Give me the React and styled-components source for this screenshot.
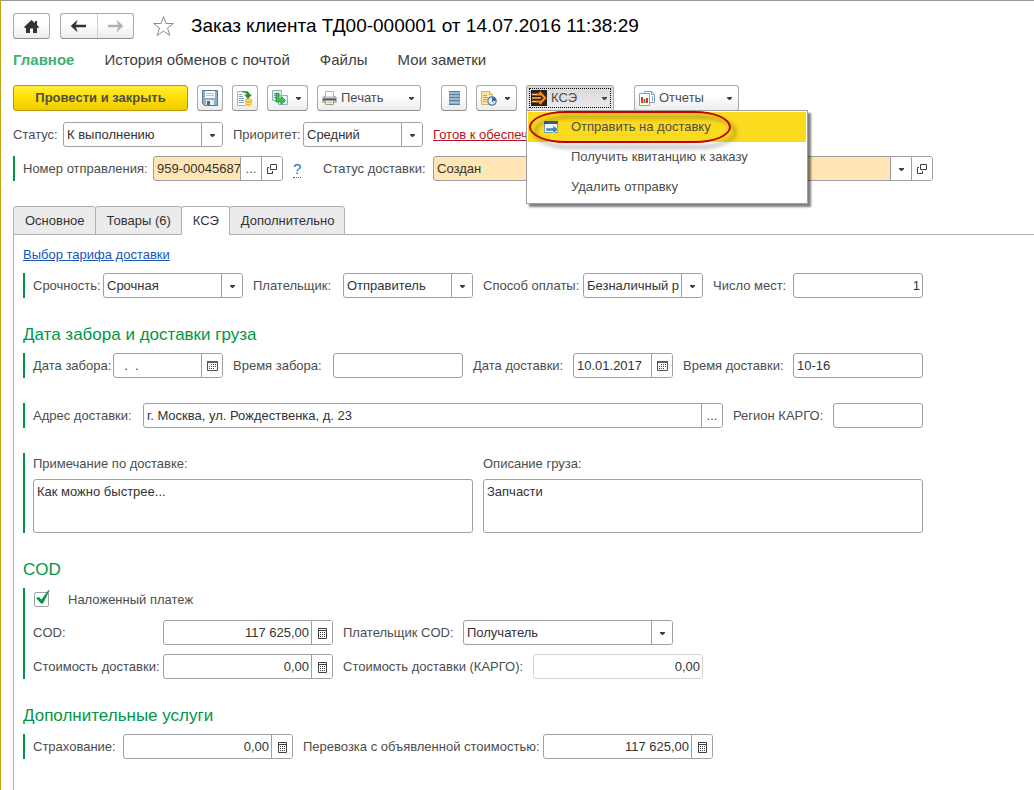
import React from 'react'
import styled, { createGlobalStyle, css } from 'styled-components'

const GlobalStyle = createGlobalStyle`
* {
    box-sizing: border-box;
}
body {
    margin: 0;
    background: #fff;
    color: #4d4d4d;
    font: 13px/16px "Liberation Sans", Arial, sans-serif;
}
button, input, select, textarea {
    font: inherit;
    color: inherit;
    margin: 0;
}
`;

const Window = styled.main`
    display: flex;
    flex-direction: column;
    min-height: 100vh;
    padding: 12px 0 0 12px;
    border-top: 1px solid #999;
    border-left: 1px solid #c4a414;
`;

const TitleBar = styled.header`
    display: flex;
    align-items: center;
    gap: 10px;
`;

const Title = styled.h1`
    margin: 0 0 0 6px;
    font-size: 19px;
    line-height: 24px;
    font-weight: 400;
    color: #000;
`;

const buttonLook = css`
    height: 26px;
    border: 1px solid #a9a9a9;
    border-bottom-color: #8f8f8f;
    border-radius: 3px;
    background: linear-gradient(#fff 40%, #ececec);
`;

const Button = styled.button`
    ${buttonLook}
    display: flex;
    align-items: center;
    justify-content: ${p => (p.$menu ? 'flex-start' : 'center')};
    gap: 4px;
    width: ${p => p.$width || 26}px;
    padding: ${p => (p.$menu ? '0 5px 0 4px' : 0)};
    svg {
        flex: none;
    }
    svg:last-child:not(:first-child) {
        margin-left: auto;
    }
`;

const PrimaryButton = styled(Button)`
    border-color: #b89b00;
    background: linear-gradient(#ffec3d, #ffdf00 50%, #efcb00);
    font-weight: 700;
    color: #4d4d4d;
`;

const PressedButton = styled(Button)`
    position: relative;
    background: linear-gradient(#d8d8d8, #ececec);
    &::after {
        content: '';
        position: absolute;
        inset: 2px;
        border: 1px dotted #000;
    }
`;

const HistoryButtons = styled.div`
    ${buttonLook}
    display: flex;
    width: 74px;
    button {
        flex: 1;
        display: grid;
        place-items: center;
        padding: 0;
        border: 0;
        background: none;
    }
    button + button {
        border-left: 1px solid #d0d0d0;
    }
`;

const StarButton = styled.button`
    display: grid;
    margin-left: 8px;
    padding: 0;
    border: 0;
    background: none;
`;

const Sections = styled.nav`
    display: flex;
    gap: 30px;
    padding: 12px 0 16px;
    font-size: 15px;
    line-height: 18px;
`;

const SectionLink = styled.a`
    color: ${p => (p.$active ? '#3bb273' : '#404040')};
    font-weight: ${p => (p.$active ? 700 : 400)};
    text-decoration: none;
`;

const CommandBar = styled.div`
    display: flex;
    gap: 20px;
`;

const CommandGroup = styled.div`
    display: flex;
    gap: 9px;
`;

const MenuAnchor = styled.div`
    position: relative;
`;

const Menu = styled.ul`
    position: absolute;
    top: 100%;
    left: 0;
    z-index: 5;
    width: 282px;
    margin: -1px 0 0;
    padding: 1px;
    list-style: none;
    background: #fff;
    border: 1px solid #a0a0a0;
    box-shadow: 3px 3px 2px rgba(0, 0, 0, .5);
`;

const MenuItem = styled.button`
    display: grid;
    grid-template-columns: 27px 1fr;
    align-items: center;
    width: 100%;
    height: 30px;
    padding: 0 16px;
    border: 0;
    text-align: left;
    background: ${p => (p.$active ? '#fcdb1f' : 'none')};
    span {
        grid-column: 2;
    }
`;

const Marker = styled.i`
    position: absolute;
    top: 0;
    left: 2px;
    width: 202px;
    height: 32px;
    border: 2px solid #c00000;
    border-radius: 36px / 16px;
    filter: drop-shadow(5px 5px 2px rgba(0, 0, 0, .45));
    pointer-events: none;
`;

const Row = styled.div`
    display: flex;
    align-items: center;
    gap: 10px;
    margin-top: ${p => p.$top || 0}px;
`;

const Group = styled.div`
    display: flex;
    flex-direction: column;
    gap: 9px;
    margin-top: ${p => p.$top || 0}px;
    padding-left: 8px;
    border-left: 2px solid #009646;
`;

const FieldBox = styled.div`
    display: flex;
    align-items: center;
    flex: 0 1 ${p => p.$label + p.$width}px;
    min-width: 0;
    > label {
        flex: none;
        width: ${p => p.$label}px;
        white-space: nowrap;
    }
`;

const Control = styled.div`
    flex: 1;
    display: flex;
    min-width: 0;
    height: 25px;
    overflow: hidden;
    border: 1px solid ${p => (p.$dim ? '#d4d4d4' : '#a0a0a0')};
    border-radius: 3px;
    background: ${p => (p.$filled ? '#ffe6b4' : '#fff')};
`;

const Input = styled.input`
    flex: 1;
    min-width: 0;
    width: 100%;
    padding: 0 ${p => (p.$right ? 2 : 0)}px 0 3px;
    border: 0;
    background: none;
    color: #333;
    outline: 0;
    text-align: ${p => (p.$right ? 'right' : 'left')};
`;

const Select = styled.select`
    flex: 1;
    min-width: 0;
    padding: 0 23px 0 3px;
    border: 0;
    background: none;
    color: #333;
    outline: 0;
    appearance: none;
`;

const Addon = styled.button`
    flex: none;
    display: grid;
    place-items: center;
    width: 21px;
    padding: 0;
    border: 0;
    border-left: 1px solid #a0a0a0;
    background: #fff;
`;

// lies over the right end of the select, clicks go through to it
const SelectArrow = styled(Addon)`
    margin-left: -21px;
    pointer-events: none;
`;

const StatusLink = styled.a`
    color: #b4141e;
`;

const HelpLink = styled.a`
    flex: none;
    width: 20px;
    color: #1a73b8;
    font-size: 15px;
    text-decoration: none;
    span {
        border-bottom: 1px dotted #1a73b8;
    }
`;

const Tabs = styled.div`
    display: flex;
    margin-top: 25px;
`;

const Tab = styled.button`
    height: 29px;
    margin: 0 0 -1px -1px;
    padding: 0 10px 0 11px;
    border: 1px solid #b0b0b0;
    border-bottom-color: ${p => (p.$active ? '#fff' : '#b0b0b0')};
    border-radius: 3px 3px 0 0;
    background: ${p => (p.$active ? '#fff' : '#ebebeb')};
    color: #333;
    z-index: 1;
    &:first-child {
        margin-left: 0;
    }
`;

const TabPanel = styled.section`
    flex: 1;
    padding: 12px 9px 16px;
    border: 1px solid #b0b0b0;
    border-width: 1px 0 0 1px;
`;

const Form = styled.form`
    max-width: 900px;
`;

const TariffLink = styled.a`
    display: inline-block;
    color: #1a55b8;
`;

const Heading = styled.h2`
    margin: 27px 0 8px;
    font-size: 17px;
    line-height: 20px;
    font-weight: 400;
    color: #009646;
`;

const Notes = styled.div`
    display: grid;
    grid-template-columns: 1fr 1fr;
    gap: 10px;
    label {
        display: block;
        padding: 3px 0 7px;
    }
`;

const Textarea = styled.textarea`
    display: block;
    width: 100%;
    height: 54px;
    padding: 4px 3px;
    border: 1px solid #a0a0a0;
    border-radius: 3px;
    color: #333;
    resize: none;
    outline: 0;
`;

const CheckLabel = styled.label`
    position: relative;
    display: flex;
    align-items: center;
    gap: 19px;
    height: 23px;
    svg {
        position: absolute;
        left: 1px;
        top: 2px;
        pointer-events: none;
    }
`;

const Checkbox = styled.input`
    width: 15px;
    height: 15px;
    margin-left: 1px;
    appearance: none;
    border: 1px solid #a0a0a0;
    border-radius: 2px;
    &:not(:checked) + svg {
        display: none;
    }
`;

const Arrow = () => (
  <svg width="7" height="6" viewBox="0 0 7 6"><path d="M1 2h5v1L4 5H3L1 3z" fill="#404040" /></svg>
)

const OpenIcon = () => (
  <svg width="10" height="10" viewBox="0 0 10 10" fill="none" stroke="#404040"><path d="M3.500.5h6v5h-6zM2 3.500H.5v6h5V7" /></svg>
)

const CalendarIcon = () => (
  <svg width="11" height="10" viewBox="0 0 11 10">
    <path d="M.5.5h10v9H.5z" fill="none" stroke="#505050" />
    <path d="M0 0h11v2H0z" fill="#606060" />
    <path d="M4 3.500h5M2 5.500h7M2 7.500h5" stroke="#404040" strokeDasharray="1 1" />
  </svg>
)

const CalcIcon = () => (
  <svg width="9" height="12" viewBox="0 0 9 12">
    <path d="M.5 1.500h8v10h-8zM.5 3.500h8" fill="none" stroke="#404040" />
    <path d="M2 5.500h5M2 7.500h5M2 9.500h5" stroke="#404040" strokeDasharray="1 1" />
  </svg>
)

const HomeIcon = () => (
  <svg width="15" height="13" viewBox="0 0 15 13">
    <path d="M7.500 0L11 3V1h2v4l2 2-1 1.200-1-.8V13H9V8.500H6V13H2V7.400l-1 .8L0 7z" fill="#333" />
  </svg>
)

const HistoryArrow = ({ back }) => (
  <svg width="15" height="12" viewBox="0 0 15 12">
    <path
      d={back ? 'M0 6l6-5.500V1l-1.500 4H15v2H4.500L6 11v.5z' : 'M15 6L9 .5V1l1.500 4H0v2h10.500L9 11v.5z'}
      fill={back ? '#333' : '#b0b0b0'}
      stroke={back ? '#333' : '#b0b0b0'}
      strokeWidth=".5"
    />
  </svg>
)

const StarIcon = () => (
  <svg width="23" height="22" viewBox="0 0 23 22">
    <path d="M11.500 1.500l2.500 7h7.500l-6 4.500 2.300 7.500-6.300-4.500-6.300 4.500L7.500 13l-6-4.500H9z" fill="#fff" stroke="#8c8c8c" />
  </svg>
)

const SaveIcon = () => (
  <svg width="16" height="16" viewBox="0 0 16 16">
    <path d="M.5.5h15v15h-13l-2-2z" fill="#8fb0c6" stroke="#557a96" />
    <path d="M3 1h10v7H3z" fill="#f4f8fa" />
    <path d="M4 3.500h8M4 5.500h8" stroke="#b4c8d4" />
    <path d="M4 10h8v5H4z" fill="#e6eef2" />
    <path d="M5 11h3v4H5z" fill="#4a6c86" />
  </svg>
)

const PostIcon = () => (
  <svg width="16" height="17" viewBox="0 0 16 17">
    <path d="M.5 1.500h10v14H.5z" fill="#fff" stroke="#9fb6c4" />
    <path d="M2 4.500h3M2 6.500h4M2 8.500h5M2 10.500h5M2 12.500h5" stroke="#7fa3bd" />
    <path d="M5 1.500C9 .5 12.500 1.500 13 4.500h2L11 9 7 4.500h3C9.500 3 8 2.500 5 2.500z" fill="#2f8a34" />
    <path d="M8 10.500v4c0 2.500 7 2.500 7 0v-4z" fill="#f0b429" />
    <path d="M8 12.500c1 1.500 6 1.500 7 0M8 14.500c1 1.500 6 1.500 7 0" fill="none" stroke="#fff0a8" />
    <ellipse cx="11.500" cy="10.500" rx="3.500" ry="1.500" fill="#ffdc6a" stroke="#d59a18" strokeWidth=".6" />
  </svg>
)

const BasedOnIcon = () => (
  <svg width="17" height="16" viewBox="0 0 17 16">
    <path d="M.5.5h9v10h-9z" fill="#e3eef4" stroke="#8fb0c4" />
    <path d="M2 3.500h3M2 5.500h2M2 7.500h2" stroke="#6f95ae" />
    <path d="M6.500 5.500h9v9h-9z" fill="#e6f2fa" stroke="#8fb0c4" />
    <path d="M4 3.500h3v5.500h2V6.500l4.500 4-4.500 4V12H4z" fill="#3cc83c" stroke="#1f8a28" strokeWidth=".8" />
  </svg>
)

const PrintIcon = () => (
  <svg width="15" height="14" viewBox="0 0 15 14">
    <path d="M3.500.5h8V6h-8z" fill="#fff" stroke="#b4b4b4" />
    <path d="M1.500 5h2v1.500h8V5h2L15 7v4l-1 1H1l-1-1V7z" fill="#b4b4b4" />
    <path d="M1 7.500h13v2H1z" fill="#5c5c5c" />
    <path d="M3.500 9.500h8v4h-8z" fill="#fbf2e6" stroke="#9c9c9c" />
    <path d="M5 11.500h5" stroke="#e0b080" />
  </svg>
)

const ListIcon = () => (
  <svg width="11" height="14" viewBox="0 0 11 14">
    <path d="M0 0h11v14H0z" fill="#8aaac0" />
    <path d="M0 .5h11M0 3.500h11M0 6.500h11M0 9.500h11M0 13.500h11" stroke="#557f9c" />
    <path d="M1 2h9M1 5h9M1 8h9M1 11.500h9" stroke="#b4cad8" />
  </svg>
)

const TaskIcon = () => (
  <svg width="16" height="16" viewBox="0 0 16 16">
    <path d="M.5 1.500h8l3 3v10H.5z" fill="#fbe6a4" stroke="#d8b45c" />
    <path d="M8.500 1.500v3h3" fill="#fff3c4" stroke="#d8b45c" />
    <path d="M2 5.500h4M2 7.500h5M2 9.500h4M2 11.500h3" stroke="#d0a040" />
    <circle cx="11" cy="11" r="4.200" fill="#eaf3fa" stroke="#4c7cae" strokeWidth="1.200" />
    <path d="M11 11V7a4 4 0 0 1 4 4z" fill="#2f68a8" />
    <path d="M11 11l2 2" fill="none" stroke="#d04030" strokeWidth=".8" />
  </svg>
)

const KseIcon = () => (
  <svg width="16" height="16" viewBox="0 0 16 16">
    <path d="M0 0h16v16H0z" fill="#2b2118" />
    <path d="M1 4.500h5M1 11.500h5" stroke="#f0d8b8" strokeWidth="1.500" />
    <path d="M5 4.500h5M1 8h9M5 11.500h5" stroke="#f58a1f" strokeWidth="2" />
    <path d="M8.500 2l5.500 6-5.500 6" fill="none" stroke="#f58a1f" strokeWidth="2.500" />
  </svg>
)

const ReportIcon = () => (
  <svg width="16" height="15" viewBox="0 0 16 15">
    <path d="M5.500.5h7l3 3v8h-10z" fill="#fff" stroke="#7fa3bd" />
    <path d="M12.500.5v3h3M13.500 5v5" fill="none" stroke="#7fa3bd" />
    <path d="M.5 2.500h10v12H.5z" fill="#fff" stroke="#7fa3bd" />
    <path d="M3 6v6" stroke="#d83a30" strokeWidth="2" />
    <path d="M5.500 8v4" stroke="#3ba040" strokeWidth="2" />
    <path d="M8 7v5" stroke="#d83a30" strokeWidth="2" />
  </svg>
)

const SendIcon = () => (
  <svg width="15" height="13" viewBox="0 0 15 13">
    <path d="M.5.5h13v11H.5z" fill="#f6fafc" stroke="#7f9db0" />
    <path d="M0 0h14v3H0z" fill="#3c6480" />
    <path d="M2 7h7V4.500l5.500 4L9 12.500V10H2z" fill="#3a83b8" stroke="#fff" strokeWidth=".5" />
  </svg>
)

const CheckIcon = () => (
  <svg width="16" height="16" viewBox="0 0 16 16">
    <path d="M2 8l3-1 2.500 2.500L14.500 0l1 .5L9 13.500H7z" fill="#009646" />
  </svg>
)

const addonIcons = {
  open: ['Открыть', <OpenIcon />],
  more: ['Выбрать', '...'],
  date: ['Календарь', <CalendarIcon />],
  calc: ['Калькулятор', <CalcIcon />],
}

function Field({ id, label, labelWidth, width, value, options, addons = [], right, filled, dim }) {
  return (
    <FieldBox $label={labelWidth} $width={width}>
      <label htmlFor={id}>{label}</label>
      <Control $filled={filled} $dim={dim}>
        {options ? (
          <>
            <Select id={id} defaultValue={options[0]}>
              {options.map(o => <option key={o}>{o}</option>)}
            </Select>
            <SelectArrow as="span"><Arrow /></SelectArrow>
          </>
        ) : (
          <Input id={id} defaultValue={value} $right={right} readOnly={dim} />
        )}
        {addons.map(a => (
          <Addon key={a} type="button" aria-label={addonIcons[a][0]}>{addonIcons[a][1]}</Addon>
        ))}
      </Control>
    </FieldBox>
  )
}

function App() {
  return (
    <Window>
      <GlobalStyle />
      <TitleBar>
        <Button $width={37} aria-label="Домой"><HomeIcon /></Button>
        <HistoryButtons>
          <button aria-label="Назад"><HistoryArrow back /></button>
          <button aria-label="Вперед"><HistoryArrow /></button>
        </HistoryButtons>
        <StarButton aria-label="В избранное"><StarIcon /></StarButton>
        <Title>Заказ клиента ТД00-000001 от 14.07.2016 11:38:29</Title>
      </TitleBar>

      <Sections>
        <SectionLink href="#main" $active>Главное</SectionLink>
        <SectionLink href="#history">История обменов с почтой</SectionLink>
        <SectionLink href="#files">Файлы</SectionLink>
        <SectionLink href="#notes">Мои заметки</SectionLink>
      </Sections>

      <CommandBar>
        <CommandGroup>
          <PrimaryButton $width={175}>Провести и закрыть</PrimaryButton>
          <Button aria-label="Записать"><SaveIcon /></Button>
          <Button aria-label="Провести"><PostIcon /></Button>
          <Button $menu $width={41} aria-label="Создать на основании"><BasedOnIcon /><Arrow /></Button>
          <Button $menu $width={104}><PrintIcon />Печать<Arrow /></Button>
        </CommandGroup>
        <CommandGroup>
          <Button aria-label="Список"><ListIcon /></Button>
          <Button $menu $width={41} aria-label="Задачи"><TaskIcon /><Arrow /></Button>
          <MenuAnchor>
            <PressedButton $menu $width={88} aria-haspopup="menu" aria-expanded="true">
              <KseIcon />КСЭ<Arrow />
            </PressedButton>
            <Menu>
              <li><MenuItem $active><SendIcon /><span>Отправить на доставку</span></MenuItem></li>
              <li><MenuItem><span>Получить квитанцию к заказу</span></MenuItem></li>
              <li><MenuItem><span>Удалить отправку</span></MenuItem></li>
              <Marker as="li" aria-hidden="true" />
            </Menu>
          </MenuAnchor>
        </CommandGroup>
        <CommandGroup>
          <Button $menu $width={105}><ReportIcon />Отчеты<Arrow /></Button>
        </CommandGroup>
      </CommandBar>

      <Row $top={11}>
        <Field id="status" label="Статус:" labelWidth={50} width={160} options={['К выполнению', 'Закрыт']} />
        <Field id="priority" label="Приоритет:" labelWidth={70} width={120} options={['Средний', 'Высокий', 'Низкий']} />
        <StatusLink href="#supply">Готов к обеспечению</StatusLink>
      </Row>

      <Group $top={9}>
        <Row>
          <Field id="number" label="Номер отправления:" labelWidth={130} width={130} value="959-00045687" addons={['more', 'open']} filled />
          <HelpLink href="#help"><span>?</span></HelpLink>
          <Field id="delivery" label="Статус доставки:" labelWidth={110} width={500} options={['Создан']} addons={['open']} filled />
        </Row>
      </Group>

      <Tabs role="tablist">
        <Tab role="tab">Основное</Tab>
        <Tab role="tab">Товары (6)</Tab>
        <Tab role="tab" aria-selected="true" $active>КСЭ</Tab>
        <Tab role="tab">Дополнительно</Tab>
      </Tabs>

      <TabPanel role="tabpanel">
        <Form>
          <TariffLink href="#tariff">Выбор тарифа доставки</TariffLink>
          <Group $top={10}>
            <Row>
              <Field id="urgency" label="Срочность:" labelWidth={70} width={140} options={['Срочная', 'Обычная']} />
              <Field id="payer" label="Плательщик:" labelWidth={90} width={130} options={['Отправитель', 'Получатель']} />
              <Field id="payment" label="Способ оплаты:" labelWidth={100} width={120} options={['Безналичный расчет', 'Наличные']} />
              <Field id="places" label="Число мест:" labelWidth={80} width={130} value="1" right />
            </Row>
          </Group>

          <Heading>Дата забора и доставки груза</Heading>
          <Group>
            <Row>
              <Field id="pickDate" label="Дата забора:" labelWidth={80} width={110} value="  .  ." addons={['date']} />
              <Field id="pickTime" label="Время забора:" labelWidth={100} width={130} value="" />
              <Field id="dropDate" label="Дата доставки:" labelWidth={100} width={100} value="10.01.2017" addons={['date']} />
              <Field id="dropTime" label="Время доставки:" labelWidth={110} width={130} value="10-16" />
            </Row>
          </Group>

          <Group $top={25}>
            <Row>
              <Field id="address" label="Адрес доставки:" labelWidth={110} width={580} value="г. Москва, ул. Рождественка, д. 23" addons={['more']} />
              <Field id="region" label="Регион КАРГО:" labelWidth={100} width={90} value="" />
            </Row>
          </Group>

          <Group $top={25}>
            <Notes>
              <div>
                <label htmlFor="note">Примечание по доставке:</label>
                <Textarea id="note" defaultValue="Как можно быстрее..." />
              </div>
              <div>
                <label htmlFor="cargo">Описание груза:</label>
                <Textarea id="cargo" defaultValue="Запчасти" />
              </div>
            </Notes>
          </Group>

          <Heading>COD</Heading>
          <Group>
            <CheckLabel>
              <Checkbox type="checkbox" defaultChecked />
              <CheckIcon />
              Наложенный платеж
            </CheckLabel>
            <Row>
              <Field id="cod" label="COD:" labelWidth={130} width={170} value="117 625,00" addons={['calc']} right />
              <Field id="codPayer" label="Плательщик COD:" labelWidth={120} width={210} options={['Получатель', 'Отправитель']} />
            </Row>
            <Row>
              <Field id="cost" label="Стоимость доставки:" labelWidth={130} width={170} value="0,00" addons={['calc']} right />
              <Field id="cargoCost" label="Стоимость доставки (КАРГО):" labelWidth={190} width={170} value="0,00" right dim />
            </Row>
          </Group>

          <Heading>Дополнительные услуги</Heading>
          <Group>
            <Row>
              <Field id="insurance" label="Страхование:" labelWidth={90} width={170} value="0,00" addons={['calc']} right />
              <Field id="declared" label="Перевозка с объявленной стоимостью:" labelWidth={240} width={170} value="117 625,00" addons={['calc']} right />
            </Row>
          </Group>
        </Form>
      </TabPanel>
    </Window>
  )
}

export default App
